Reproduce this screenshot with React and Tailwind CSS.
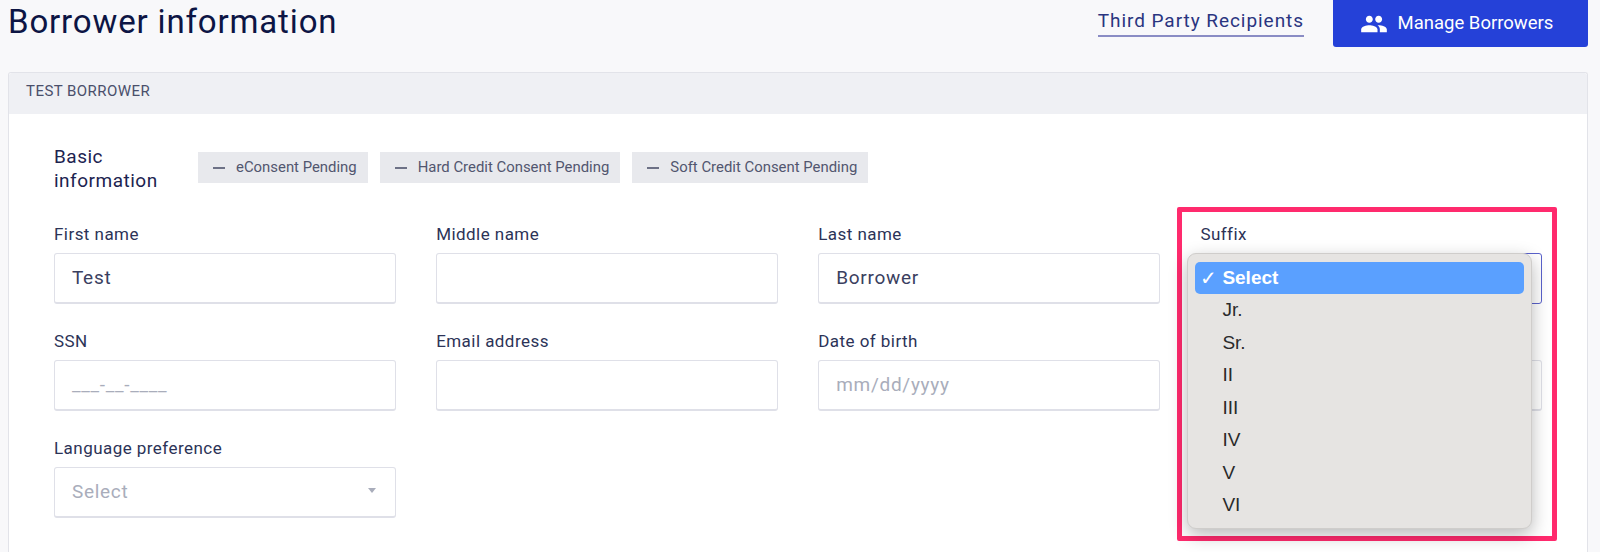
import React from "react";
import { MdPeople } from "react-icons/md";

function Field({ label, value, placeholder, arrow, focused }) {
  return (
    <div className="flex flex-col">
      <div className="h-[18px] text-[17px] leading-[18px] tracking-[0.45px] text-[#2c3357]">{label}</div>
      <div
        className={`mt-[10px] flex h-[51px] items-center justify-between rounded-[3px] border bg-white pl-[17px] pr-[18px] text-[19px] tracking-[0.7px] ${
          focused ? "border-[#5a62cc]" : "border-[#dfe0e8] border-b-2"
        } ${value ? "text-[#3a4060]" : "text-[#a9adbb]"}`}
      >
        <span>{value || placeholder}</span>
        {arrow && <span className="mr-[1px] mb-[4px] h-0 w-0 border-x-[4px] border-t-[5px] border-x-transparent border-t-[#a9adbb]" />}
      </div>
    </div>
  );
}

const options = ["Jr.", "Sr.", "II", "III", "IV", "V", "VI"];

function Chip({ children }) {
  return (
    <div className="flex h-[31px] items-center bg-[#e8e9ed] pl-[15px] pr-[11px] text-[14.9px] text-[#52566f]">
      <span className="mr-[11px] h-[2px] w-[12px] bg-[#6d7186]" />
      {children}
    </div>
  );
}

export default function App() {
  return (
    <div className="h-[552px] overflow-hidden bg-[#f8f8fa] font-['Roboto',sans-serif]">
      <header className="flex h-[72px] items-start justify-between pl-2 pr-3">
        <h1 className="mt-[3px] text-[33px] font-normal leading-[38px] tracking-[0.85px] text-[#0d1544]">Borrower information</h1>
        <div className="flex items-start">
          <a className="mt-[9px] border-b-2 border-[#8a8cc4] pb-[2px] text-[19px] leading-[24px] tracking-[0.95px] text-[#2a3580]">Third Party Recipients</a>
          <button className="ml-[29px] flex h-[47px] w-[255px] items-center justify-center gap-[10px] rounded-b-[3px] bg-[#2541d8] pr-[8px] text-[18.5px] text-white">
            <MdPeople className="text-[28px]" />
            Manage Borrowers
          </button>
        </div>
      </header>

      <section className="ml-2 mr-3 h-[480px] rounded-t-[3px] border border-b-0 border-[#e2e3e9] bg-white">
        <div className="flex h-[41px] items-center rounded-t-[3px] bg-[#eff0f4] pb-[4px] pl-[17px] text-[15px] tracking-[0.45px] text-[#4a4f6b]">
          TEST BORROWER
        </div>

        <div className="px-[45px]">
          <div className="mt-[30px] flex items-start">
            <div className="mt-[1px] w-[144px] text-[19px] leading-[24px] tracking-[0.5px] text-[#1c2350]">
              Basic
              <br />
              information
            </div>
            <div className="mt-[8px] flex gap-[12px]">
              <Chip>eConsent Pending</Chip>
              <Chip>Hard Credit Consent Pending</Chip>
              <Chip>Soft Credit Consent Pending</Chip>
            </div>
          </div>

          <div className="mt-[32px] grid grid-cols-4 gap-x-[40.5px] gap-y-[28px]">
            <Field label="First name" value="Test" />
            <Field label="Middle name" />
            <Field label="Last name" value="Borrower" />
            <div className="relative">
              <Field label="Suffix" focused />
              <div className="absolute left-[-23px] top-[-18px] h-[334px] w-[380px] rounded-[2px] border-[5px] border-[#ff2a6d]" />
              <div className="absolute left-[-13px] top-[28px] z-10 h-[276px] w-[345px] rounded-[9px] border border-[#cfcdcb] bg-[#e6e4e2] px-[7px] pt-[8px] font-['Liberation_Sans',sans-serif] text-[19px] text-[#2a2a2a] shadow-[0_6px_18px_rgba(0,0,0,0.28)]">
                <div className="relative flex h-[32px] items-center rounded-[5px] bg-[#5aa0ff] pl-[27px] font-bold text-white">
                  <span className="absolute left-[5px] text-[20px] font-normal">✓</span>
                  Select
                </div>
                {options.map((o) => (
                  <div key={o} className="flex h-[32.5px] items-center pl-[27px]">{o}</div>
                ))}
              </div>
            </div>

            <Field label="SSN" placeholder="___-__-____" />
            <Field label="Email address" />
            <Field label="Date of birth" placeholder="mm/dd/yyyy" />
            <Field label={"\u00a0"} />

            <Field label="Language preference" placeholder="Select" arrow />
          </div>
        </div>
      </section>
    </div>
  );
}
